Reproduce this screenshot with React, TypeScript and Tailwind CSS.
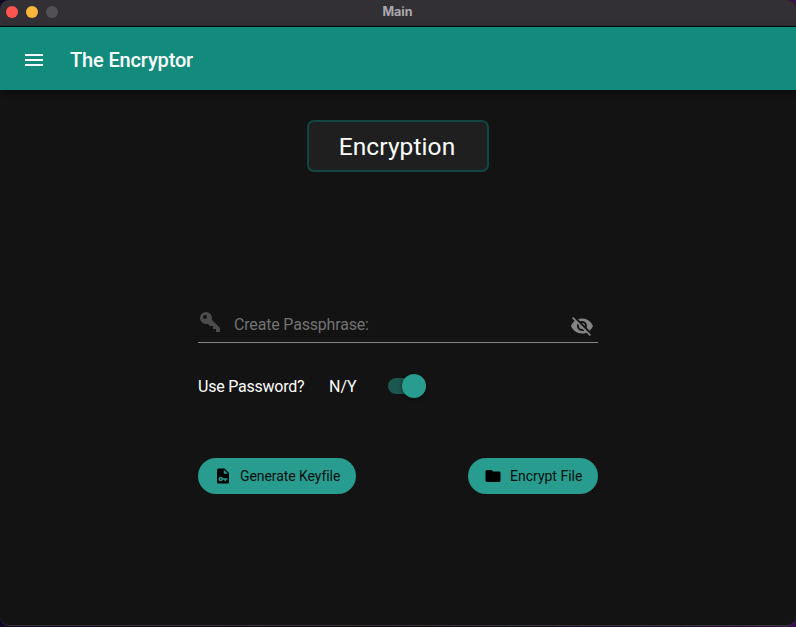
import React from "react";

type IconProps = { d: string; className: string };

function Icon({ d, className }: IconProps) {
  return (
    <svg viewBox="0 0 24 24" fill="currentColor" fillRule="evenodd" className={className}>
      <path d={d} />
    </svg>
  );
}

const MENU = "M3,6H21V8H3V6M3,11H21V13H3V11M3,16H21V18H3V16Z";
const KEY =
  "M22,18V22H18V19H15V16H12L9.74,13.74C9.19,13.91 8.61,14 8,14A6,6 0 0,1 2,8A6,6 0 0,1 8,2A6,6 0 0,1 14,8C14,8.61 13.91,9.19 13.74,9.74L22,18M7,5A2,2 0 0,0 5,7A2,2 0 0,0 7,9A2,2 0 0,0 9,7A2,2 0 0,0 7,5Z";
const EYE_OFF =
  "M11.83,9L15,12.16C15,12.11 15,12.05 15,12A3,3 0 0,0 12,9C11.94,9 11.89,9 11.83,9M7.53,9.8L9.08,11.35C9.03,11.56 9,11.77 9,12A3,3 0 0,0 12,15C12.22,15 12.44,14.97 12.65,14.92L14.2,16.47C13.53,16.8 12.79,17 12,17A5,5 0 0,1 7,12C7,11.21 7.2,10.47 7.53,9.8M2,4.27L4.28,6.55L4.73,7C3.08,8.3 1.78,10 1,12C2.73,16.39 7,19.5 12,19.5C13.55,19.5 15.03,19.2 16.38,18.66L16.81,19.08L19.73,22L21,20.73L3.27,3M12,7A5,5 0 0,1 17,12C17,12.64 16.87,13.26 16.64,13.82L19.57,16.75C21.07,15.5 22.27,13.86 23,12C21.27,7.61 17,4.5 12,4.5C10.6,4.5 9.26,4.75 8,5.2L10.17,7.35C10.74,7.13 11.35,7 12,7Z";
const FILE_KEY =
  "M6,2H14L20,8V20A2,2 0 0,1 18,22H6A2,2 0 0,1 4,20V4A2,2 0 0,1 6,2M13,3.5V9H18.5L13,3.5M11.8,15A3,3 0 1,0 11.8,17H14V19H16V17H18V15H11.8M9,15A1,1 0 0,1 9,17A1,1 0 0,1 9,15Z";
const FOLDER =
  "M10,4H4C2.89,4 2,4.89 2,6V18A2,2 0 0,0 4,20H20A2,2 0 0,0 22,18V8C22,6.89 21.1,6 20,6H12L10,4Z";

function TitleBar() {
  return (
    <div className="flex h-[27px] shrink-0 items-start border-b border-black bg-[#323035]">
      <div className="flex w-24 gap-2 pt-1.5 pl-1.5">
        <span className="size-3 rounded-full bg-[#ff5550]" />
        <span className="size-3 rounded-full bg-[#ffb43a]" />
        <span className="size-3 rounded-full bg-[#525056]" />
      </div>
      <h1 className="flex-1 pr-px text-center font-[Inter,sans-serif] text-[12.5px] leading-6 font-bold text-[#aba9ae]">
        Main
      </h1>
      <div className="w-24" />
    </div>
  );
}

export default function App() {
  return (
    <div className="h-[627px] w-[796px] bg-linear-to-r from-[#100827] via-[#0a060f] to-[#3a0f52] font-[Roboto,sans-serif]">
      <div className="flex h-[626px] flex-col overflow-hidden rounded-[9px] border-b border-[#353535] bg-[#131313] text-white">
        <TitleBar />
        <header className="flex h-[63px] shrink-0 items-center bg-[#128b7d] pb-px pl-[22px] shadow-[0_2px_7px_rgba(0,0,0,0.5)]">
          <div className="flex items-center gap-6 pt-1">
            <Icon d={MENU} className="size-6" />
            <span className="text-[20px] leading-6 font-medium tracking-[-0.15px]">The Encryptor</span>
          </div>
        </header>
        <main className="flex flex-col items-center">
          <div className="mt-[30px] flex h-[52px] w-[182px] items-center justify-center rounded-[7px] border-2 border-[#124642] bg-[#1f1f1f] pt-0.5 pr-0.5 text-[24.5px] tracking-[0.1px]">
            Encryption
          </div>
          <section className="mt-[134px] w-[400px]">
            <div className="flex h-[37px] items-start border-b border-[#848484]">
              <Icon d={KEY} className="mt-1 size-6 text-[#4c4c4c]" />
              <span className="mt-[7px] ml-3 flex-1 text-[16px] leading-6 tracking-[-0.18px] text-[#727272]">
                Create Passphrase:
              </span>
              <Icon d={EYE_OFF} className="mt-2 mr-1 size-6 text-[#848484]" />
            </div>
            <div className="mt-[31px] flex h-6 items-center text-[16px]">
              <span className="w-[131px] pt-0.5 tracking-[-0.22px]">Use Password?</span>
              <span className="w-[59px] pt-0.5">N/Y</span>
              <div className="flex h-4 w-[38px] items-center justify-end rounded-full bg-[#1c574f]">
                <span className="size-6 shrink-0 rounded-full bg-[#289c8f] shadow-[0_1px_4px_rgba(0,0,0,0.5)]" />
              </div>
            </div>
            <div className="mt-[60px] flex justify-between text-[14px] text-[#080f0e]">
              <button className="flex h-9 w-[158px] items-center gap-2 rounded-full bg-[#289c8f] pl-4">
                <Icon d={FILE_KEY} className="size-[18px] text-black" />
                <span className="tracking-[-0.07px]">Generate Keyfile</span>
              </button>
              <button className="flex h-9 w-[130px] items-center gap-2 rounded-full bg-[#289c8f] pl-4">
                <Icon d={FOLDER} className="size-[18px] text-black" />
                <span>Encrypt File</span>
              </button>
            </div>
          </section>
        </main>
      </div>
    </div>
  );
}
